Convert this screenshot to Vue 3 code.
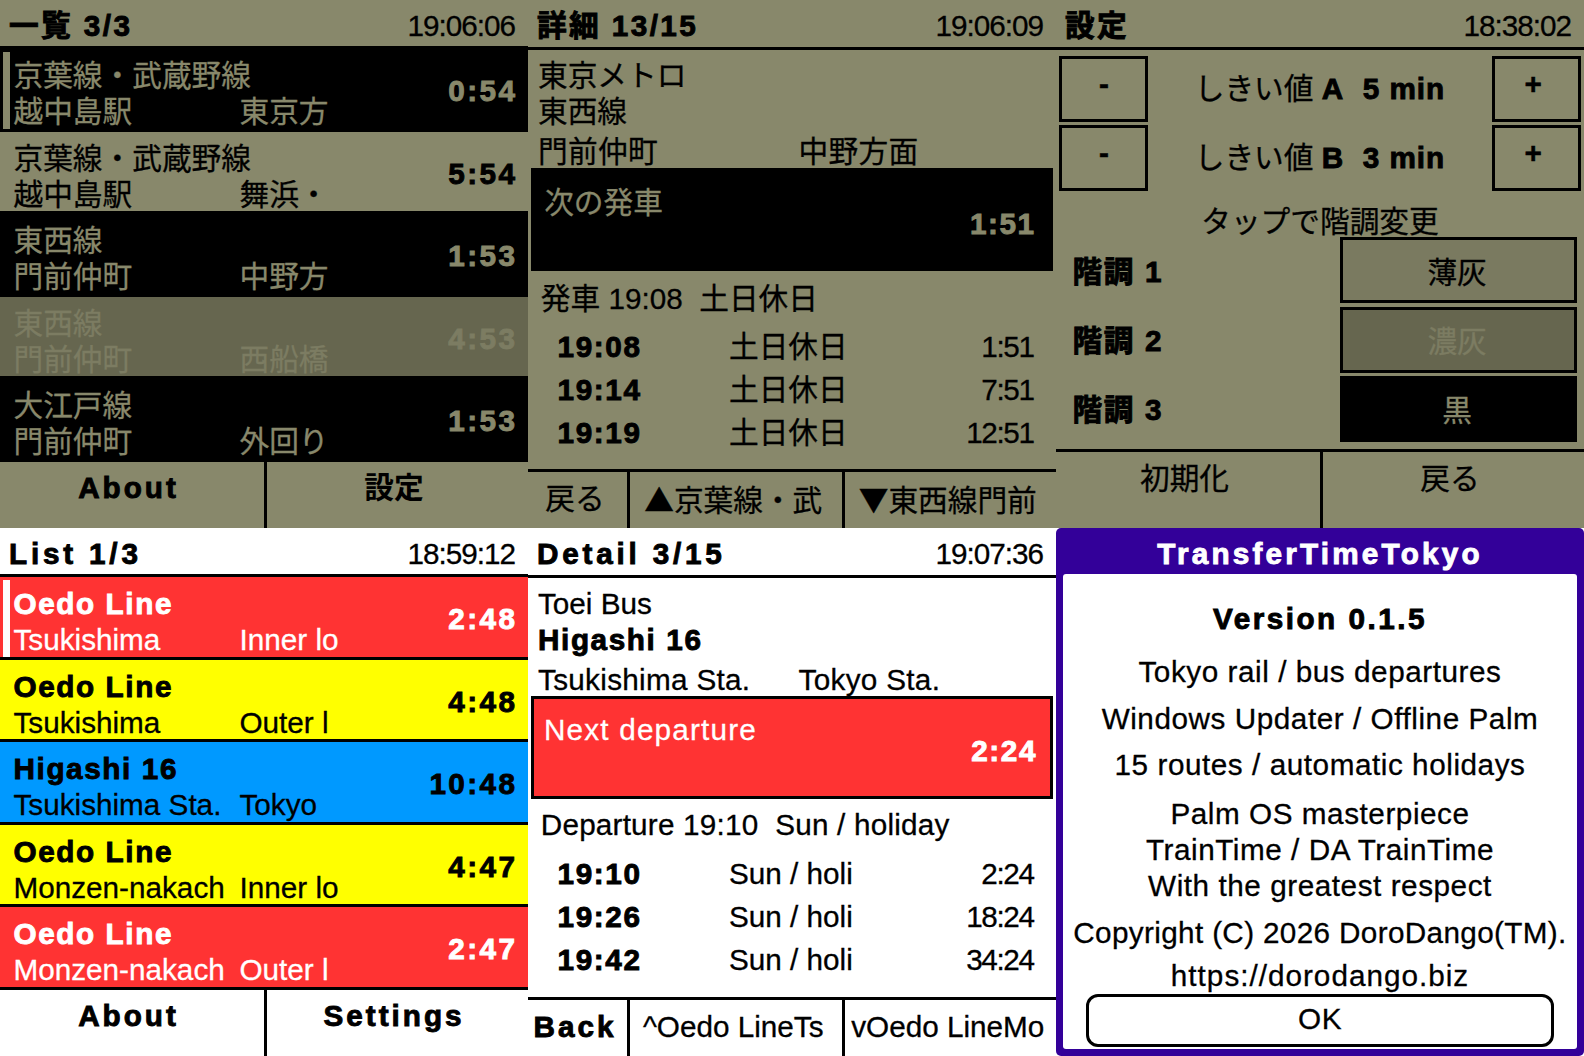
<script setup>
const jaList = [
  { line: '京葉線・武蔵野線', from: '越中島駅', to: '東京方', time: '0:54', tone: 'black', mark: true },
  { line: '京葉線・武蔵野線', from: '越中島駅', to: '舞浜・', time: '5:54', tone: 'plain' },
  { line: '東西線', from: '門前仲町', to: '中野方', time: '1:53', tone: 'black' },
  { line: '東西線', from: '門前仲町', to: '西船橋', time: '4:53', tone: 'gray' },
  { line: '大江戸線', from: '門前仲町', to: '外回り', time: '1:53', tone: 'black' },
];
const enList = [
  { line: 'Oedo Line', from: 'Tsukishima', to: 'Inner lo', time: '2:48', tone: 'red', mark: true },
  { line: 'Oedo Line', from: 'Tsukishima', to: 'Outer l', time: '4:48', tone: 'yellow' },
  { line: 'Higashi 16', from: 'Tsukishima Sta.', to: 'Tokyo', time: '10:48', tone: 'blue' },
  { line: 'Oedo Line', from: 'Monzen-nakach', to: 'Inner lo', time: '4:47', tone: 'yellow' },
  { line: 'Oedo Line', from: 'Monzen-nakach', to: 'Outer l', time: '2:47', tone: 'red' },
];
const jaTimes = [
  { dep: '19:08', day: '土日休日', left: '1:51' },
  { dep: '19:14', day: '土日休日', left: '7:51' },
  { dep: '19:19', day: '土日休日', left: '12:51' },
];
const enTimes = [
  { dep: '19:10', day: 'Sun / holi', left: '2:24' },
  { dep: '19:26', day: 'Sun / holi', left: '18:24' },
  { dep: '19:42', day: 'Sun / holi', left: '34:24' },
];
const steppers = [
  { name: 'しきい値', key: 'A', val: '5 min' },
  { name: 'しきい値', key: 'B', val: '3 min' },
];
const tones = [
  { label: '階調 1', name: '薄灰', cls: 'light' },
  { label: '階調 2', name: '濃灰', cls: 'dark' },
  { label: '階調 3', name: '黒', cls: 'solid' },
];
</script>

<template>
  <div class="sheet">
    <!-- list, japanese -->
    <section class="screen olive">
      <header class="top"><b class="ttl ja">一覧 3/3</b><span class="clock">19:06:06</span></header>
      <div class="list">
        <div v-for="(r, i) in jaList" :key="i" class="row" :class="r.tone">
          <i v-if="r.mark" class="mark"></i>
          <div class="cell">{{ r.line }}</div>
          <div class="eta">{{ r.time }}</div>
          <div class="sub"><span class="from">{{ r.from }}</span><span>{{ r.to }}</span></div>
        </div>
      </div>
      <footer class="foot two">
        <div class="btn"><b class="about">About</b></div>
        <div class="btn"><b class="plainb">設定</b></div>
      </footer>
    </section>

    <!-- detail, japanese -->
    <section class="screen olive">
      <header class="top ruled"><b class="ttl ja">詳細 13/15</b><span class="clock">19:06:09</span></header>
      <div class="info">
        <div>東京メトロ</div>
        <div>東西線</div>
        <div class="route"><span>門前仲町</span><span>中野方面</span></div>
      </div>
      <div class="next blackbox">
        <div>次の発車</div>
        <b>1:51</b>
      </div>
      <div class="dep">発車 19:08&nbsp; 土日休日</div>
      <div class="table">
        <div v-for="t in jaTimes" :key="t.dep" class="trow">
          <b>{{ t.dep }}</b><span>{{ t.day }}</span><span class="left">{{ t.left }}</span>
        </div>
      </div>
      <footer class="foot three">
        <div class="btn">戻る</div>
        <div class="btn"><span class="tri">▲</span>京葉線・武</div>
        <div class="btn"><span class="tri">▼</span>東西線門前</div>
      </footer>
    </section>

    <!-- settings -->
    <section class="screen olive">
      <header class="top ruled"><b class="ttl ja">設定</b><span class="clock">18:38:02</span></header>
      <div class="steps">
        <div v-for="s in steppers" :key="s.key" class="step">
          <div class="sbtn">-</div>
          <div class="slabel">{{ s.name }} <b>{{ s.key }}&nbsp; {{ s.val }}</b></div>
          <div class="sbtn plus">+</div>
        </div>
      </div>
      <div class="hint">タップで階調変更</div>
      <div class="tones">
        <div v-for="t in tones" :key="t.label" class="tone">
          <b class="tlabel">{{ t.label }}</b>
          <div class="swatch" :class="t.cls">{{ t.name }}</div>
        </div>
      </div>
      <footer class="foot two ruled-foot">
        <div class="btn">初期化</div>
        <div class="btn">戻る</div>
      </footer>
    </section>

    <!-- list, english -->
    <section class="screen white">
      <header class="top"><b class="ttl">List 1/3</b><span class="clock">18:59:12</span></header>
      <div class="list">
        <div v-for="(r, i) in enList" :key="i" class="row" :class="r.tone">
          <i v-if="r.mark" class="mark"></i>
          <b class="cell">{{ r.line }}</b>
          <div class="eta">{{ r.time }}</div>
          <div class="sub"><span class="from">{{ r.from }}</span><span>{{ r.to }}</span></div>
        </div>
      </div>
      <footer class="foot two">
        <div class="btn"><b class="about">About</b></div>
        <div class="btn"><b class="about">Settings</b></div>
      </footer>
    </section>

    <!-- detail, english -->
    <section class="screen white">
      <header class="top ruled"><b class="ttl">Detail 3/15</b><span class="clock">19:07:36</span></header>
      <div class="info">
        <div>Toei Bus</div>
        <b>Higashi 16</b>
        <div class="route"><span>Tsukishima Sta.</span><span>Tokyo Sta.</span></div>
      </div>
      <div class="next redbox">
        <div class="nextlabel">Next departure</div>
        <b>2:24</b>
      </div>
      <div class="dep en">Departure 19:10&nbsp; Sun / holiday</div>
      <div class="table">
        <div v-for="t in enTimes" :key="t.dep" class="trow">
          <b>{{ t.dep }}</b><span>{{ t.day }}</span><span class="left">{{ t.left }}</span>
        </div>
      </div>
      <footer class="foot three">
        <div class="btn"><b class="about">Back</b></div>
        <div class="btn">^Oedo LineTs</div>
        <div class="btn">vOedo LineMo</div>
      </footer>
    </section>

    <!-- about dialog -->
    <section class="screen dialog">
      <header class="dtitle">TransferTimeTokyo</header>
      <div class="dbody">
        <b class="ver">Version 0.1.5</b>
        <div class="group g1">
          <p>Tokyo rail / bus departures</p>
          <p>Windows Updater / Offline Palm</p>
          <p>15 routes / automatic holidays</p>
        </div>
        <div class="group g2">
          <p>Palm OS masterpiece</p>
          <p>TrainTime / DA TrainTime</p>
          <p>With the greatest respect</p>
        </div>
        <p class="copy">Copyright (C) 2026 DoroDango(TM).</p>
        <p class="url">https://dorodango.biz</p>
        <div class="ok">OK</div>
      </div>
    </section>
  </div>
</template>

<style>
html, body {
  margin: 0;
  background: #fff;
}
</style>

<style scoped>
.sheet {
  display: grid;
  grid-template-columns: repeat(3, 528px);
  grid-template-rows: repeat(2, 528px);
  width: 1584px;
  font-family: "Liberation Sans", "Noto Sans CJK JP", sans-serif;
  font-size: 29.7px;
  line-height: 36.3px;
  color: #000;
  white-space: nowrap;
  -webkit-text-stroke: 0.3px;
}
.screen {
  display: flex;
  flex-direction: column;
  height: 528px;
  overflow: hidden;
  box-sizing: border-box;
}
.olive { background: #88886b; }
.white { background: #fff; }

b {
  font-weight: 700;
  letter-spacing: 1.6px;
  -webkit-text-stroke: 0.9px;
}

.top {
  display: flex;
  justify-content: space-between;
  flex: none;
  height: 46.2px;
  padding: 7.5px 13px 0 9px;
  box-sizing: border-box;
}
.top.ruled {
  height: 49.5px;
  border-bottom: 3.3px solid #000;
}
.ttl { letter-spacing: 3.8px; }
.ttl.ja { letter-spacing: 2.4px; }
.clock { letter-spacing: -1px; }

/* list rows */
.list { flex: none; }
.row {
  position: relative;
  display: grid;
  grid-template-columns: 1fr auto;
  height: 82.5px;
  box-sizing: border-box;
  border-top: 3.3px solid #000;
  padding: 9px 13px 0 13.5px;
}
.row:last-child {
  height: 85.8px;
  border-bottom: 3.3px solid #000;
}
.mark {
  position: absolute;
  left: 3.3px;
  top: 3.3px;
  bottom: 0;
  width: 6.6px;
  background: currentColor;
}
.cell { grid-column: 1; grid-row: 1; }
.eta {
  grid-column: 2;
  grid-row: 1 / 3;
  align-self: center;
  font-weight: 700;
  letter-spacing: 2.4px;
  -webkit-text-stroke: 0.9px;
  margin-right: -2.4px;
  margin-top: -6.5px;
}
.sub {
  grid-column: 1;
  grid-row: 2;
  display: flex;
}
.from {
  flex: none;
  width: 226px;
}
.row.black { background: #000; color: #88886b; }
.row.plain { color: #000; }
.row.gray { background: #66664f; color: #7c7c62; }
.row.red { background: #ff3333; color: #fff; }
.row.yellow { background: #ffff00; }
.row.blue { background: #0099ff; }

/* bottom bars */
.foot {
  display: grid;
  flex: 1;
  min-height: 0;
  box-sizing: border-box;
}
.foot.two { grid-template-columns: 264px 1fr; }
.foot.three {
  grid-template-columns: 99px 214.5px 1fr;
  flex: none;
  height: 59.4px;
  margin-top: auto;
  border-top: 3.3px solid #000;
}
.ruled-foot {
  flex: none;
  height: 79.2px;
  margin-top: auto;
  border-top: 3.3px solid #000;
}
.foot .btn + .btn { border-left: 3.3px solid #000; }
.btn {
  text-align: center;
  overflow: hidden;
  padding-top: 8px;
  padding-right: 7px;
}
.ruled-foot .btn { padding-top: 9.5px; }
.three .btn { padding-top: 9px; padding-right: 5px; }
.tri { font-family: "Noto Sans CJK JP", sans-serif; }
.about { letter-spacing: 3px; }
.plainb { letter-spacing: 0; -webkit-text-stroke: 0; }

/* detail */
.info {
  flex: none;
  display: flex;
  flex-direction: column;
  height: 118.8px;
  padding: 8.6px 0 0 10px;
  box-sizing: border-box;
}
.route {
  display: flex;
  margin-top: 3.6px;
  letter-spacing: 0.3px;
}
.route span:first-child {
  flex: none;
  width: 260.6px;
}
.next {
  flex: none;
  box-sizing: border-box;
  height: 102.3px;
  margin: 0 3.3px;
  padding: 16.7px 17px 0 12.9px;
}
.next b {
  display: block;
  text-align: right;
  margin-top: -15.3px;
}
.nextlabel { letter-spacing: 1.2px; }
.blackbox { background: #000; color: #88886b; }
.redbox {
  background: #ff3333;
  color: #fff;
  border: 3.3px solid #000;
  padding: 13px 12.7px 0 9.6px;
}
.dep { padding: 10.4px 0 0 12.8px; }
.dep.en {
  padding-top: 8.9px;
  padding-bottom: 0;
  letter-spacing: 0.2px;
}
.dep.en + .table { padding-top: 12.2px; }
.table { padding: 11.7px 22.5px 0 29.6px; }
.trow {
  display: grid;
  grid-template-columns: 171.4px 1fr auto;
  height: 42.9px;
}
.left { letter-spacing: -1.4px; }

/* settings */
.steps {
  display: flex;
  flex-direction: column;
  gap: 3.4px;
  padding: 6.6px 3.3px 0;
  flex: none;
}
.step {
  display: grid;
  grid-template-columns: 89.1px 1fr 89.1px;
  height: 65.9px;
  align-items: center;
  text-align: center;
}
.slabel b { letter-spacing: 1px; }
.sbtn {
  height: 65.9px;
  box-sizing: border-box;
  border: 3.3px solid #000;
  font-weight: 700;
  -webkit-text-stroke: 0.5px;
  line-height: 49px;
}
.sbtn.plus { padding-right: 6px; }
.hint {
  flex: none;
  height: 46.2px;
  padding-top: 13px;
  box-sizing: border-box;
  text-align: center;
}
.tones {
  display: flex;
  flex-direction: column;
  gap: 3.3px;
  padding: 0 6.6px 0 16.5px;
}
.tone {
  display: grid;
  grid-template-columns: 267.3px 1fr;
  grid-template-rows: 66px;
  height: 66px;
  align-items: center;
}
.tlabel { padding-top: 3px; }
.swatch {
  height: 66px;
  box-sizing: border-box;
  border: 3.3px solid #000;
  text-align: center;
  line-height: 50px;
  padding: 7.1px 3px 0 0;
}
.swatch.light { background: #7a7a60; }
.swatch.dark { background: #66664f; color: #7c7c62; }
.swatch.solid { background: #000; color: #88886b; }

/* about */
.dialog {
  background: #330099;
  border-radius: 5px;
  padding: 0 6.6px 6.6px;
}
.dtitle {
  flex: none;
  height: 46.2px;
  color: #fff;
  font-weight: 700;
  letter-spacing: 3.2px;
  -webkit-text-stroke: 0.9px;
  text-align: center;
  padding-top: 7.5px;
  box-sizing: border-box;
}
.dbody {
  flex: 1;
  display: flex;
  flex-direction: column;
  align-items: center;
  background: #fff;
  min-height: 0;
  padding-top: 27.3px;
  border-radius: 3px;
  letter-spacing: 0.55px;
}
.dbody p { margin: 0; }
.ver { letter-spacing: 2.5px; }
.group { text-align: center; }
.g1 { margin-top: 6.7px; }
.g1 p { margin-top: 10px; }
.g2 { margin-top: 12.5px; }
.dbody .copy { margin-top: 10.7px; letter-spacing: 0.35px; }
.dbody .url { margin-top: 5.8px; letter-spacing: 1px; }
.ok {
  flex: none;
  width: 468.6px;
  height: 52.8px;
  margin-top: auto;
  margin-bottom: 3.3px;
  box-sizing: border-box;
  border: 3.3px solid #000;
  border-radius: 12px;
  background: #fff;
  text-align: center;
  line-height: 43px;
}
</style>
